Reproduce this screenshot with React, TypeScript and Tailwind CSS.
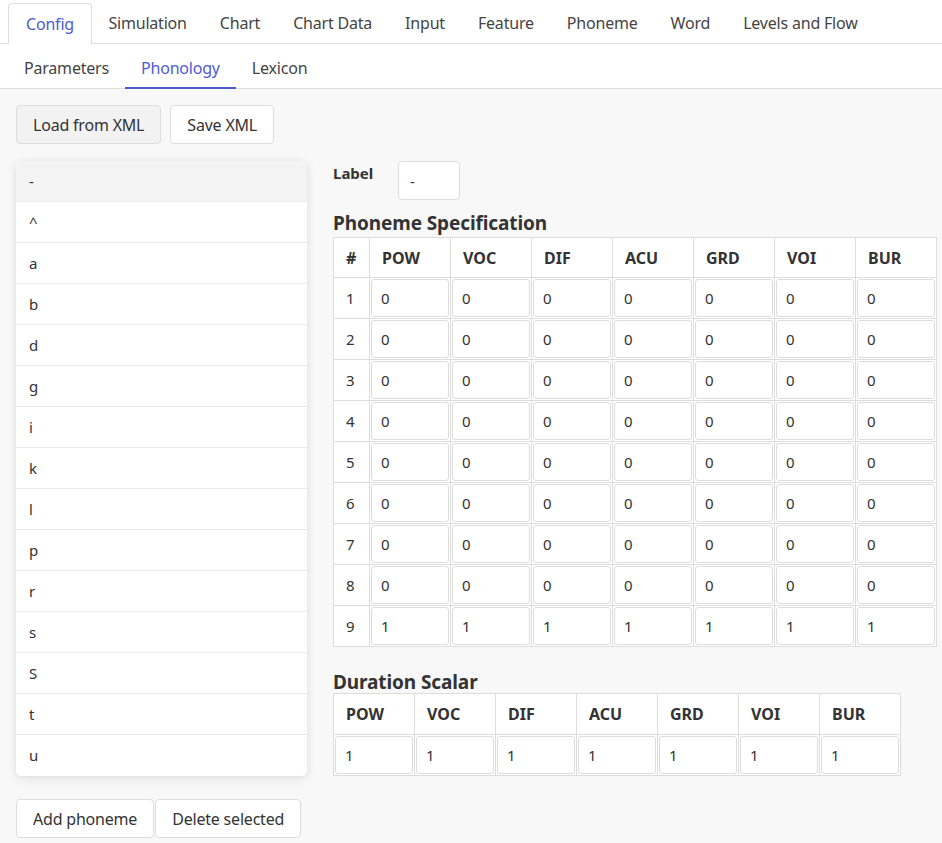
import React from "react";

const tabs = ["Config", "Simulation", "Chart", "Chart Data", "Input", "Feature", "Phoneme", "Word", "Levels and Flow"];
const subtabs = ["Parameters", "Phonology", "Lexicon"];
const phonemes = ["-", "^", "a", "b", "d", "g", "i", "k", "l", "p", "r", "s", "S", "t", "u"];
const feats = ["POW", "VOC", "DIF", "ACU", "GRD", "VOI", "BUR"];

function Cell({ v }: { v: string }) {
  return (
    <td className="border border-[#ddd] p-[1px]">
      <input
        readOnly
        value={v}
        className="block w-full h-[38px] border border-[#ddd] rounded-[3px] bg-white px-[9px] text-[15px] text-[#333] outline-none"
      />
    </td>
  );
}

export default function App() {
  return (
    <div className="min-h-[843px] bg-[#f8f8f8] text-[#333] font-['Noto_Sans',sans-serif]">
      <div className="flex items-end h-[44px] bg-white border-b border-[#ddd] pl-2">
        {tabs.map((t, i) =>
          i === 0 ? (
            <div
              key={t}
              className="h-[41px] -mb-px flex items-center px-[17px] border border-b-0 border-[#ddd] rounded-t-[4px] bg-white text-[16px] tracking-[-0.2px] text-[#4f5bd5]"
            >
              {t}
            </div>
          ) : (
            <div key={t} className="h-[40px] flex items-center px-[16.5px] text-[16px] tracking-[-0.2px] text-[#444]">
              {t}
            </div>
          )
        )}
      </div>
      <div className="flex h-[45px] bg-white border-b border-[#ddd] pl-2">
        {subtabs.map((t, i) => (
          <div
            key={t}
            className={
              i === 1
                ? "h-[45px] -mb-px flex items-center pt-[4px] px-4 text-[16px] tracking-[-0.2px] text-[#4f5bd5] border-b-2 border-[#4a5bd0]"
                : "h-[44px] flex items-center pt-[3px] px-4 text-[16px] tracking-[-0.2px] text-[#444]"
            }
          >
            {t}
          </div>
        ))}
      </div>
      <div className="px-4 pt-4">
        <div className="flex gap-[9px]">
          <button className="h-[39px] px-[16px] border border-[#ddd] rounded-[4px] bg-[#f2f2f2] text-[16px] tracking-[-0.2px] text-[#333]">
            Load from XML
          </button>
          <button className="h-[39px] px-[16px] border border-[#ddd] rounded-[4px] bg-white text-[16px] tracking-[-0.2px] text-[#333]">
            Save XML
          </button>
        </div>
        <div className="flex mt-[17px] gap-[26px]">
          <div className="w-[291px] shrink-0">
            <div className="bg-white rounded-[6px] shadow-[0_2px_10px_rgba(0,0,0,0.12)] overflow-hidden">
              {phonemes.map((p, i) => (
                <div
                  key={p}
                  className={
                    "h-[41px] flex items-center px-[13px] text-[15px] " +
                    (i < phonemes.length - 1 ? "border-b border-[#eaeaea] " : "") +
                    (i === 0 ? "bg-[#f3f3f3]" : "bg-white")
                  }
                >
                  {p}
                </div>
              ))}
            </div>
            <div className="flex mt-[23px] gap-px">
              <button className="h-[39px] px-[16px] border border-[#ddd] rounded-[4px] bg-white text-[16px] tracking-[-0.2px] text-[#333]">
                Add phoneme
              </button>
              <button className="h-[39px] px-[16px] border border-[#ddd] rounded-[4px] bg-white text-[16px] tracking-[-0.2px] text-[#333]">
                Delete selected
              </button>
            </div>
          </div>
          <div className="flex-1">
            <div className="flex items-start">
              <div className="w-[65px] pt-[1px] text-[15px] font-bold">Label</div>
              <input
                readOnly
                value="-"
                className="w-[62px] h-[39px] border border-[#ddd] rounded-[4px] bg-white px-[11px] text-[15px] outline-none"
              />
            </div>
            <h2 className="mt-[10px] text-[19px] font-bold leading-[27px] tracking-[-0.1px]">Phoneme Specification</h2>
            <table className="table-fixed border-collapse bg-white w-[603px] text-[15px]">
              <colgroup>
                <col className="w-[36px]" />
                {feats.map((f) => (
                  <col key={f} className="w-[81px]" />
                ))}
              </colgroup>
              <thead>
                <tr className="h-[40px]">
                  <th className="border border-[#ddd] px-[12px] text-left text-[16px] font-bold">#</th>
                  {feats.map((f) => (
                    <th key={f} className="border border-[#ddd] px-[12px] text-left text-[16px] font-bold">
                      {f}
                    </th>
                  ))}
                </tr>
              </thead>
              <tbody>
                {[1, 2, 3, 4, 5, 6, 7, 8, 9].map((r) => (
                  <tr key={r}>
                    <td className="border border-[#ddd] px-[12px]">{r}</td>
                    {feats.map((f) => (
                      <Cell key={f} v={r === 9 ? "1" : "0"} />
                    ))}
                  </tr>
                ))}
              </tbody>
            </table>
            <h2 className="mt-[24px] text-[19px] font-bold leading-[22px] tracking-[-0.1px]">Duration Scalar</h2>
            <table className="table-fixed border-collapse bg-white w-[567px] text-[15px]">
              <colgroup>
                {feats.map((f) => (
                  <col key={f} className="w-[81px]" />
                ))}
              </colgroup>
              <thead>
                <tr className="h-[41px]">
                  {feats.map((f) => (
                    <th key={f} className="border border-[#ddd] px-[12px] text-left text-[16px] font-bold">
                      {f}
                    </th>
                  ))}
                </tr>
              </thead>
              <tbody>
                <tr>
                  {feats.map((f) => (
                    <Cell key={f} v="1" />
                  ))}
                </tr>
              </tbody>
            </table>
          </div>
        </div>
      </div>
    </div>
  );
}
